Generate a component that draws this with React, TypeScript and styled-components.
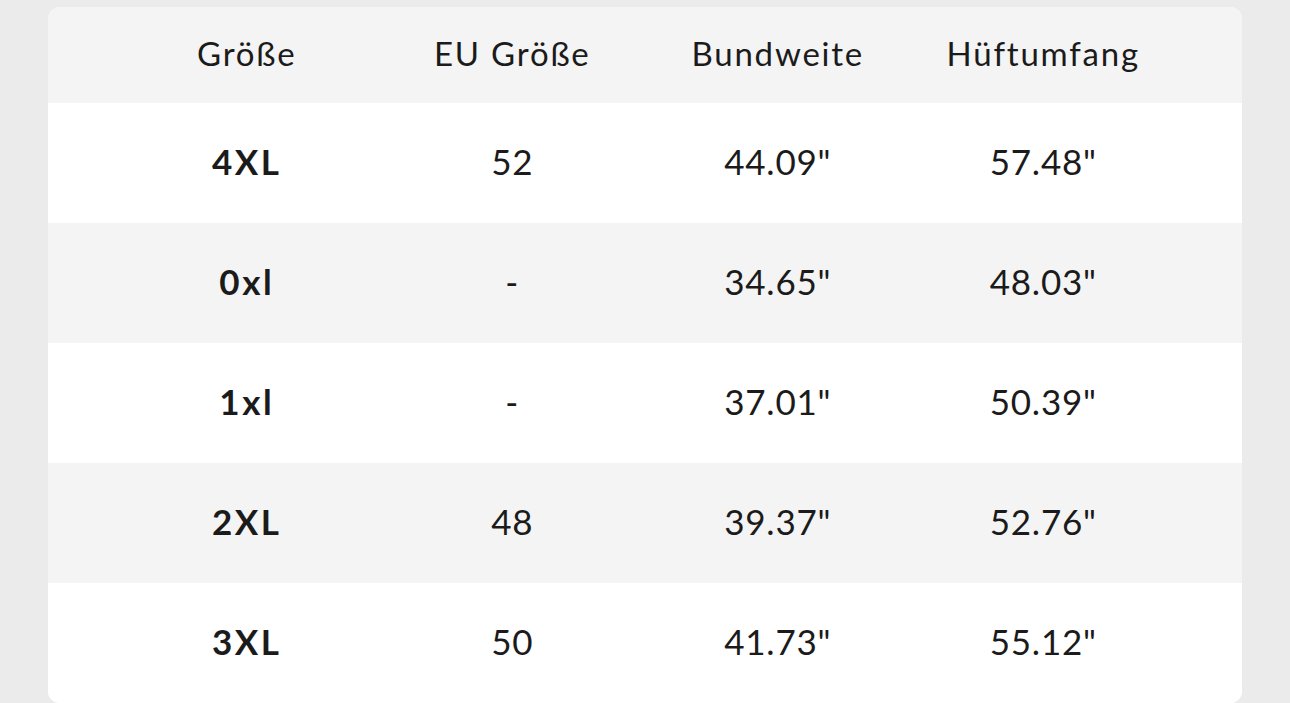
import React from "react";
import styled, { createGlobalStyle } from "styled-components";

const Global = createGlobalStyle`
  html, body {
    margin: 0;
    padding: 0;
    background: #ebebeb;
  }
  body {
    font-family: Lato, "Noto Sans", "Liberation Sans", sans-serif;
    color: #1b1b1b;
  }
`;

const Page = styled.div`
  padding: 7px 48px 0;
  height: 703px;
  box-sizing: border-box;
  overflow: hidden;
`;

const Card = styled.div`
  background: #ffffff;
  border-radius: 12px;
  overflow: hidden;
  width: 1194px;
`;

const Row = styled.div<{ $shade: boolean; $head?: boolean }>`
  display: grid;
  grid-template-columns: repeat(4, 1fr);
  padding: 0 66px;
  height: ${(p) => (p.$head ? 96 : 120)}px;
  align-items: center;
  background: ${(p) => (p.$shade ? "#f4f4f4" : "#ffffff")};
`;

const HeadCell = styled.div`
  text-align: center;
  font-size: 33px;
  font-weight: 400;
  letter-spacing: 1.8px;
  padding-bottom: 4px;
`;

const Cell = styled.div<{ $bold?: boolean }>`
  text-align: center;
  font-size: 35px;
  font-weight: ${(p) => (p.$bold ? 700 : 400)};
  letter-spacing: ${(p) => (p.$bold ? "2.5px" : "0.8px")};
  padding-bottom: 4px;
`;

const headers = ["Größe", "EU Größe", "Bundweite", "Hüftumfang"];
const rows = [
  ["4XL", "52", "44.09\"", "57.48\""],
  ["0xl", "-", "34.65\"", "48.03\""],
  ["1xl", "-", "37.01\"", "50.39\""],
  ["2XL", "48", "39.37\"", "52.76\""],
  ["3XL", "50", "41.73\"", "55.12\""],
];

export default function App() {
  return (
    <>
      <Global />
      <Page>
        <Card>
          <Row $shade $head>
            {headers.map((h) => (
              <HeadCell key={h}>{h}</HeadCell>
            ))}
          </Row>
          {rows.map((r, i) => (
            <Row key={r[0]} $shade={i % 2 === 1}>
              {r.map((c, j) => (
                <Cell key={j} $bold={j === 0}>
                  {c}
                </Cell>
              ))}
            </Row>
          ))}
        </Card>
      </Page>
    </>
  );
}
